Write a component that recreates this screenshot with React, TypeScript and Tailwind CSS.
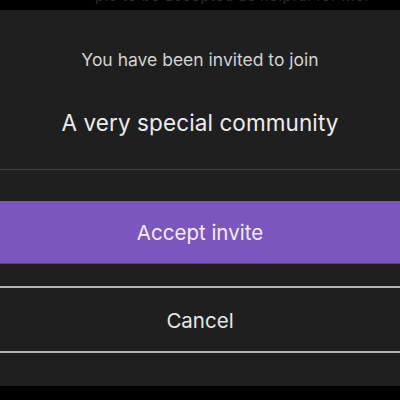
export default function App() {
  const font = { fontFamily: 'Inter, "Liberation Sans", sans-serif' };
  return (
    <div className="w-[400px] h-[400px] bg-black flex flex-col overflow-hidden" style={font}>
      {/* edge of the page behind the sheet */}
      <div className="h-[10px] overflow-hidden relative">
        <div className="absolute left-[95px] top-[-14px] text-[15px] leading-[20px] text-[#2c2c2c] whitespace-nowrap tracking-wide">
          ple to be accepted as helpful for Mor
        </div>
      </div>

      <div className="h-[376px] bg-[#1f1f1f] flex flex-col">
        <div className="pt-[39px] pb-[32px] flex flex-col items-center">
          <p className="text-[17.5px] leading-[22px] text-[#d2d2d2]">You have been invited to join</p>
          <p className="mt-[38px] text-[22.5px] leading-[28px] tracking-[0.1px] text-[#ececec]">
            A very special community
          </p>
        </div>
        <div className="h-px bg-[#404040]" />

        <button className="mt-[31px] h-[63px] pt-[3px] bg-[#7b56bf] border-b border-[#5a3f8c] text-[20.5px] text-[#f3eefb]">
          Accept invite
        </button>

        <div className="mt-[22px] h-[2px] bg-[#b4b4b4]" />
        <button className="h-[63px] pt-[3px] text-[20.5px] text-[#e6e6e6]">Cancel</button>
        <div className="h-[2px] bg-[#b4b4b4]" />
      </div>
    </div>
  );
}
